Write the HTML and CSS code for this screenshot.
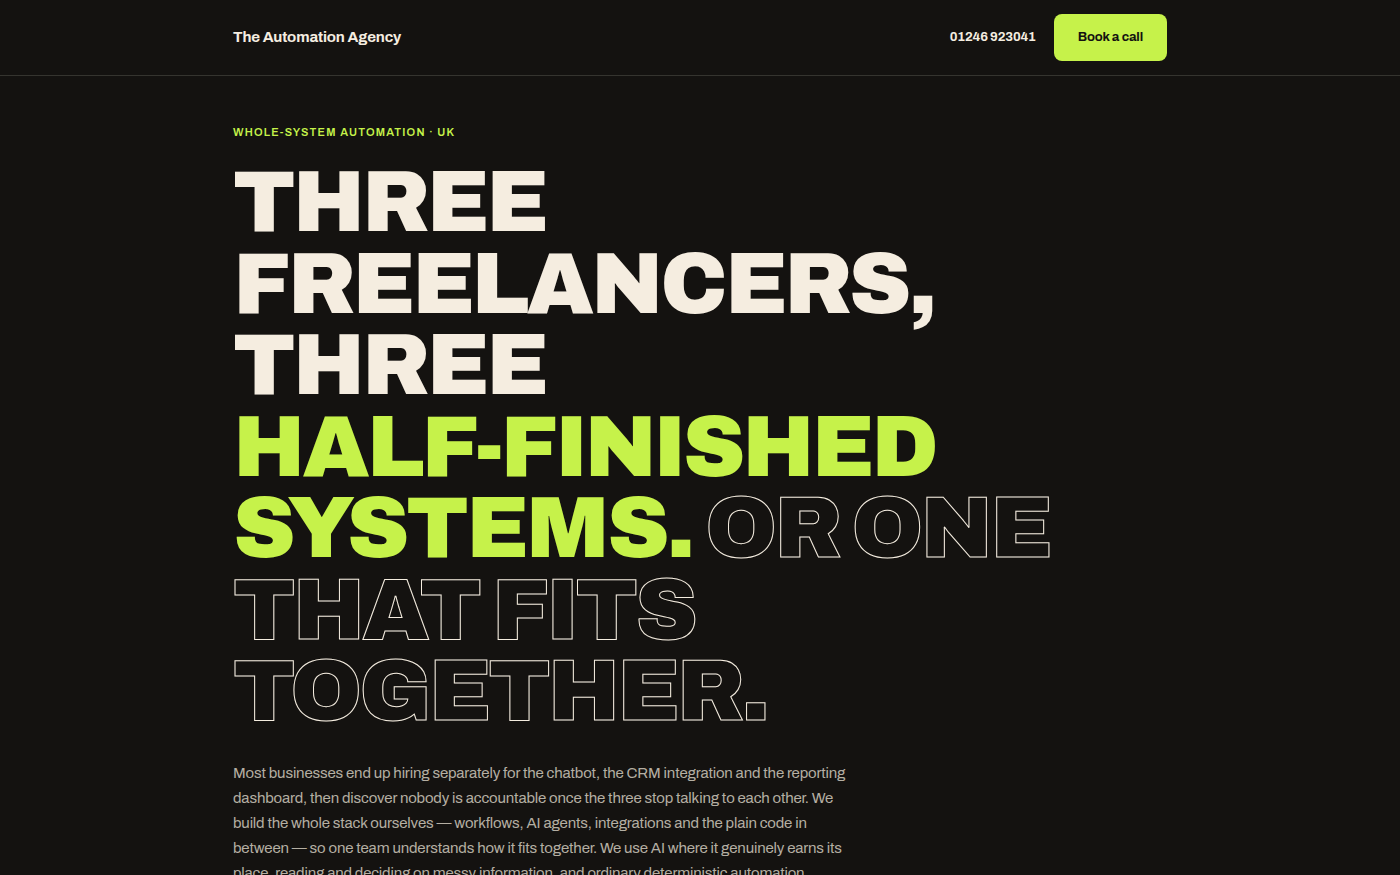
FILE: index.html
```html
<!DOCTYPE html>
<html lang="en">
<head>
    <meta charset="UTF-8">
    <meta name="viewport" content="width=device-width, initial-scale=1.0">
    <title>The Automation Agency</title>
    <link rel="stylesheet" href="styles.css">
</head>
<body>
    <header class="site-header">
        <div class="container header-inner">
            <a class="brand" href="#">The Automation Agency</a>
            <div class="header-actions">
                <a class="phone" href="tel:01246923041">01246 923041</a>
                <a class="button" href="#book">Book a call</a>
            </div>
        </div>
    </header>

    <main class="container hero">
        <p class="eyebrow">Whole-system automation · UK</p>
        <h1>Three freelancers, three <span class="accent"><span class="nowrap">half-finished</span> systems.</span> <span class="outline">Or one that fits together.</span></h1>
        <p class="lede">Most businesses end up hiring separately for the chatbot, the CRM integration and the reporting dashboard, then discover nobody is accountable once the three stop talking to each other. We build the whole stack ourselves — workflows, AI agents, integrations and the plain code in between — so one team understands how it fits together. We use AI where it genuinely earns its place, reading and deciding on messy information, and ordinary deterministic automation</p>
    </main>
</body>
</html>
```
FILE: styles.css
```css
* {
    margin: 0;
    padding: 0;
    box-sizing: border-box;
}

body {
    background: #141210;
    color: #f5ede0;
    font-family: "Archivo", "Liberation Sans", Arial, sans-serif;
    font-size: 15px;
    line-height: 25px;
    letter-spacing: -0.01em;
}

a {
    color: inherit;
    text-decoration: none;
}

.container {
    max-width: 982px;
    margin: 0 auto;
    padding: 0 24px;
}

.site-header {
    border-bottom: 1px solid #35342f;
}

.header-inner {
    display: flex;
    align-items: center;
    justify-content: space-between;
    padding-top: 14px;
    padding-bottom: 14px;
}

.brand {
    font-weight: 700;
}

.header-actions {
    display: flex;
    align-items: center;
    gap: 18px;
}

.phone {
    font-size: 13px;
    font-weight: 700;
}

.button {
    background: #c6f24a;
    color: #141210;
    border-radius: 8px;
    padding: 11px 24px;
    font-size: 13px;
    font-weight: 700;
}

.hero {
    padding-top: 44px;
}

.eyebrow {
    color: #c6f24a;
    font-size: 11px;
    font-weight: 600;
    letter-spacing: 0.11em;
    text-transform: uppercase;
    margin-bottom: 17px;
}

h1 {
    max-width: 860px;
    font-size: clamp(40px, 6.2vw, 92px);
    font-weight: 900;
    line-height: 0.94;
    letter-spacing: -0.035em;
    text-transform: uppercase;
    margin-bottom: 28px;
}

.nowrap {
    white-space: nowrap;
}

.accent {
    color: #c6f24a;
}

.outline {
    color: transparent;
    -webkit-text-stroke: 1px #f5ede0;
}

.lede {
    max-width: 620px;
    color: #b5afa3;
}
```
